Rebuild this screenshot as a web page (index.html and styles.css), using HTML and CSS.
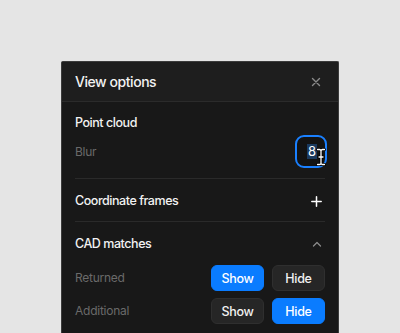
FILE: index.html
```html
<!DOCTYPE html>
<html>
<head>
<meta charset="utf-8">
<link rel="stylesheet" href="styles.css">
</head>
<body>
<div class="panel">
  <div class="panel-header">
    <span class="title">View options</span>
    <svg class="icon-close" width="10" height="10" viewBox="0 0 10 10"><path d="M1.5 1.5 L8.5 8.5 M8.5 1.5 L1.5 8.5" stroke="#8a8a8a" stroke-width="1.4" stroke-linecap="round"/></svg>
  </div>
  <div class="panel-body">
    <section class="section section-first">
      <div class="section-title">Point cloud</div>
      <div class="row">
        <span class="label">Blur</span>
        <div class="num-input"><span class="sel">8</span>
          <svg class="cursor" width="10" height="18" viewBox="0 0 10 18"><path d="M1.5 1.5 H3.5 Q5 1.5 5 3 Q5 1.5 6.5 1.5 H8.5 M5 3 V15 M1.5 16.5 H3.5 Q5 16.5 5 15 Q5 16.5 6.5 16.5 H8.5 M3 9 H7" fill="none" stroke="#000" stroke-width="3" stroke-linecap="round"/><path d="M1.5 1.5 H3.5 Q5 1.5 5 3 Q5 1.5 6.5 1.5 H8.5 M5 3 V15 M1.5 16.5 H3.5 Q5 16.5 5 15 Q5 16.5 6.5 16.5 H8.5 M3 9 H7" fill="none" stroke="#fff" stroke-width="1.3" stroke-linecap="round"/></svg>
        </div>
      </div>
    </section>
    <section class="section">
      <div class="section-head">
        <span class="section-title">Coordinate frames</span>
        <svg width="11" height="11" viewBox="0 0 11 11"><path d="M5.5 0.8 V10.2 M0.8 5.5 H10.2" stroke="#fff" stroke-width="1.5" stroke-linecap="round"/></svg>
      </div>
    </section>
    <section class="section section-last">
      <div class="section-head">
        <span class="section-title">CAD matches</span>
        <svg width="10" height="6" viewBox="0 0 10 6"><path d="M1.5 5 L5 1.5 L8.5 5" fill="none" stroke="#8a8a8a" stroke-width="1.3" stroke-linecap="round" stroke-linejoin="round"/></svg>
      </div>
      <div class="rows">
        <div class="row-btn">
          <span class="label">Returned</span>
          <div class="seg">
            <button class="btn btn-on">Show</button>
            <button class="btn">Hide</button>
          </div>
        </div>
        <div class="row-btn">
          <span class="label">Additional</span>
          <div class="seg">
            <button class="btn">Show</button>
            <button class="btn btn-on">Hide</button>
          </div>
        </div>
      </div>
    </section>
  </div>
</div>
</body>
</html>
```
FILE: styles.css
```css
* { box-sizing: border-box; }
html, body { margin: 0; padding: 0; }
body {
  background: #e5e5e5;
  font-family: Inter, "Noto Sans", sans-serif;
  height: 333px;
  overflow: hidden;
}
.panel {
  margin: 61px 0 0 61px;
  width: 278px;
  background: #181818;
  border: 1px solid #3c3c3c;
  border-bottom: none;
  border-radius: 2px 2px 0 0;
  height: 272px;
}
.panel-header {
  height: 40px;
  display: flex;
  align-items: center;
  justify-content: space-between;
  padding: 0 17px 0 13px;
  background: #1e1e1e;
  border-bottom: 1px solid #2b2b2b;
}
.title {
  color: #f2f2f2;
  font-size: 14px;
  font-weight: 500;
  letter-spacing: -0.45px;
}
.icon-close { display: block; }
.panel-body { padding: 0 13px; }
.section {
  border-bottom: 1px solid #2a2a2a;
  padding: 12px 0 10px;
}
.section-first { padding: 11px 0 10px; }
.section-last { border-bottom: none; }
.section-title {
  color: #f2f2f2;
  font-size: 12.5px;
  font-weight: 500;
  line-height: 20px;
  letter-spacing: -0.45px;
}
.section-head {
  display: flex;
  align-items: center;
  justify-content: space-between;
  padding-right: 3px;
}
.section-head svg { display: block; }
.row {
  margin-top: 2px;
  display: flex;
  align-items: center;
  justify-content: space-between;
}
.label {
  color: #6a6a6a;
  font-size: 12px;
  line-height: 20px;
  letter-spacing: -0.25px;
}
.num-input {
  position: relative;
  width: 32px;
  height: 33px;
  margin-right: -2px;
  border: 2px solid #1a80ff;
  border-radius: 9px;
  background: #131313;
  display: flex;
  align-items: center;
  padding-left: 10px;
}
.sel {
  background: #1b3a5e;
  color: #fff;
  font-size: 13px;
  line-height: 15px;
  width: 10px;
  text-align: center;
}
.cursor {
  position: absolute;
  left: 19px;
  top: 11px;
}
.rows {
  margin-top: 11px;
  display: flex;
  flex-direction: column;
  gap: 7px;
}
.row-btn {
  display: flex;
  align-items: center;
  justify-content: space-between;
}
.seg { display: flex; gap: 8px; }
.btn {
  width: 53px;
  height: 26px;
  border-radius: 6px;
  border: 1px solid #2f2f2f;
  background: #262626;
  color: #f2f2f2;
  font-family: Inter, "Noto Sans", sans-serif;
  font-size: 12.5px;
  font-weight: 500;
  letter-spacing: -0.3px;
  padding: 0;
}
.btn-on {
  background: #0a7cff;
  border-color: #0a7cff;
  color: #fff;
}
```
